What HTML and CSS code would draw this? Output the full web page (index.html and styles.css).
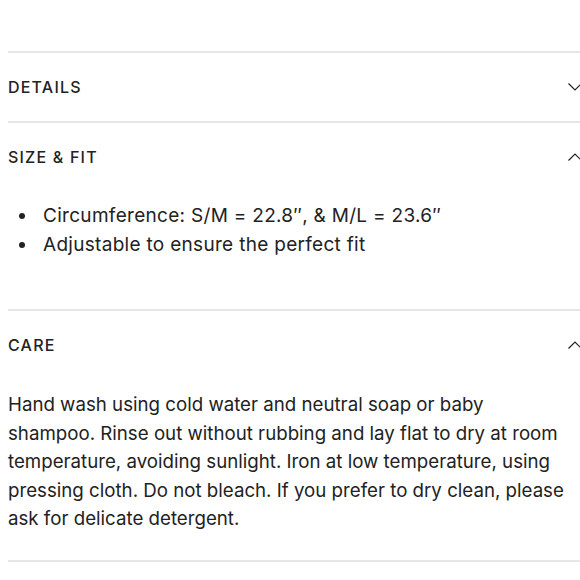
FILE: index.html
```html
<!DOCTYPE html>
<html lang="en">
<head>
<meta charset="utf-8">
<link rel="stylesheet" href="styles.css">
</head>
<body>
<div class="accordion">
  <section class="item">
    <div class="head">
      <span class="title">DETAILS</span>
      <svg class="chev" viewBox="0 0 14 8" width="14" height="8"><path d="M0.5 0.5 L7 7 L13.5 0.5" fill="none" stroke="#222" stroke-width="1.2"/></svg>
    </div>
  </section>
  <section class="item">
    <div class="head">
      <span class="title">SIZE &amp; FIT</span>
      <svg class="chev" viewBox="0 0 14 8" width="14" height="8"><path d="M0.5 7.5 L7 1 L13.5 7.5" fill="none" stroke="#222" stroke-width="1.2"/></svg>
    </div>
    <ul class="bullets">
      <li>Circumference: S/M = 22.8″, &amp; M/L = 23.6″</li>
      <li>Adjustable to ensure the perfect fit</li>
    </ul>
  </section>
  <section class="item">
    <div class="head">
      <span class="title">CARE</span>
      <svg class="chev" viewBox="0 0 14 8" width="14" height="8"><path d="M0.5 7.5 L7 1 L13.5 7.5" fill="none" stroke="#222" stroke-width="1.2"/></svg>
    </div>
    <p class="care">Hand wash using cold water and neutral soap or baby shampoo. Rinse out without rubbing and lay flat to dry at room temperature, avoiding sunlight. Iron at low temperature, using pressing cloth. Do not bleach. If you prefer to dry clean, please ask for delicate detergent.</p>
  </section>
</div>
</body>
</html>
```
FILE: styles.css
```css
html { overflow: hidden; background: #fff; }
body {
  margin: 0;
  padding: 51px 0 0 8px;
  font-family: "Inter", "Liberation Sans", sans-serif;
  color: #222;
}
.accordion {
  width: 574px;
  border-bottom: 2px solid #e6e6e6;
}
.item {
  border-top: 2px solid #e6e6e6;
}
.head {
  height: 68px;
  display: flex;
  align-items: center;
  justify-content: space-between;
}
.title {
  font-size: 16px;
  font-weight: 500;
  letter-spacing: 1.2px;
}
.chev { display: block; }
.bullets {
  list-style: none;
  margin: 10px 0 0;
  padding: 0 0 50px 35px;
  font-size: 19px;
  letter-spacing: 0.3px;
  line-height: 29px;
}
.bullets li { position: relative; }
.bullets li::before {
  content: "";
  position: absolute;
  left: -24px;
  top: 12px;
  width: 6px;
  height: 6px;
  border-radius: 50%;
  background: #222;
}
.care {
  margin: 12px 0 0;
  width: 566px;
  padding: 0 0 26px;
  font-size: 18.7px;
  letter-spacing: 0;
  line-height: 28.5px;
}
```
